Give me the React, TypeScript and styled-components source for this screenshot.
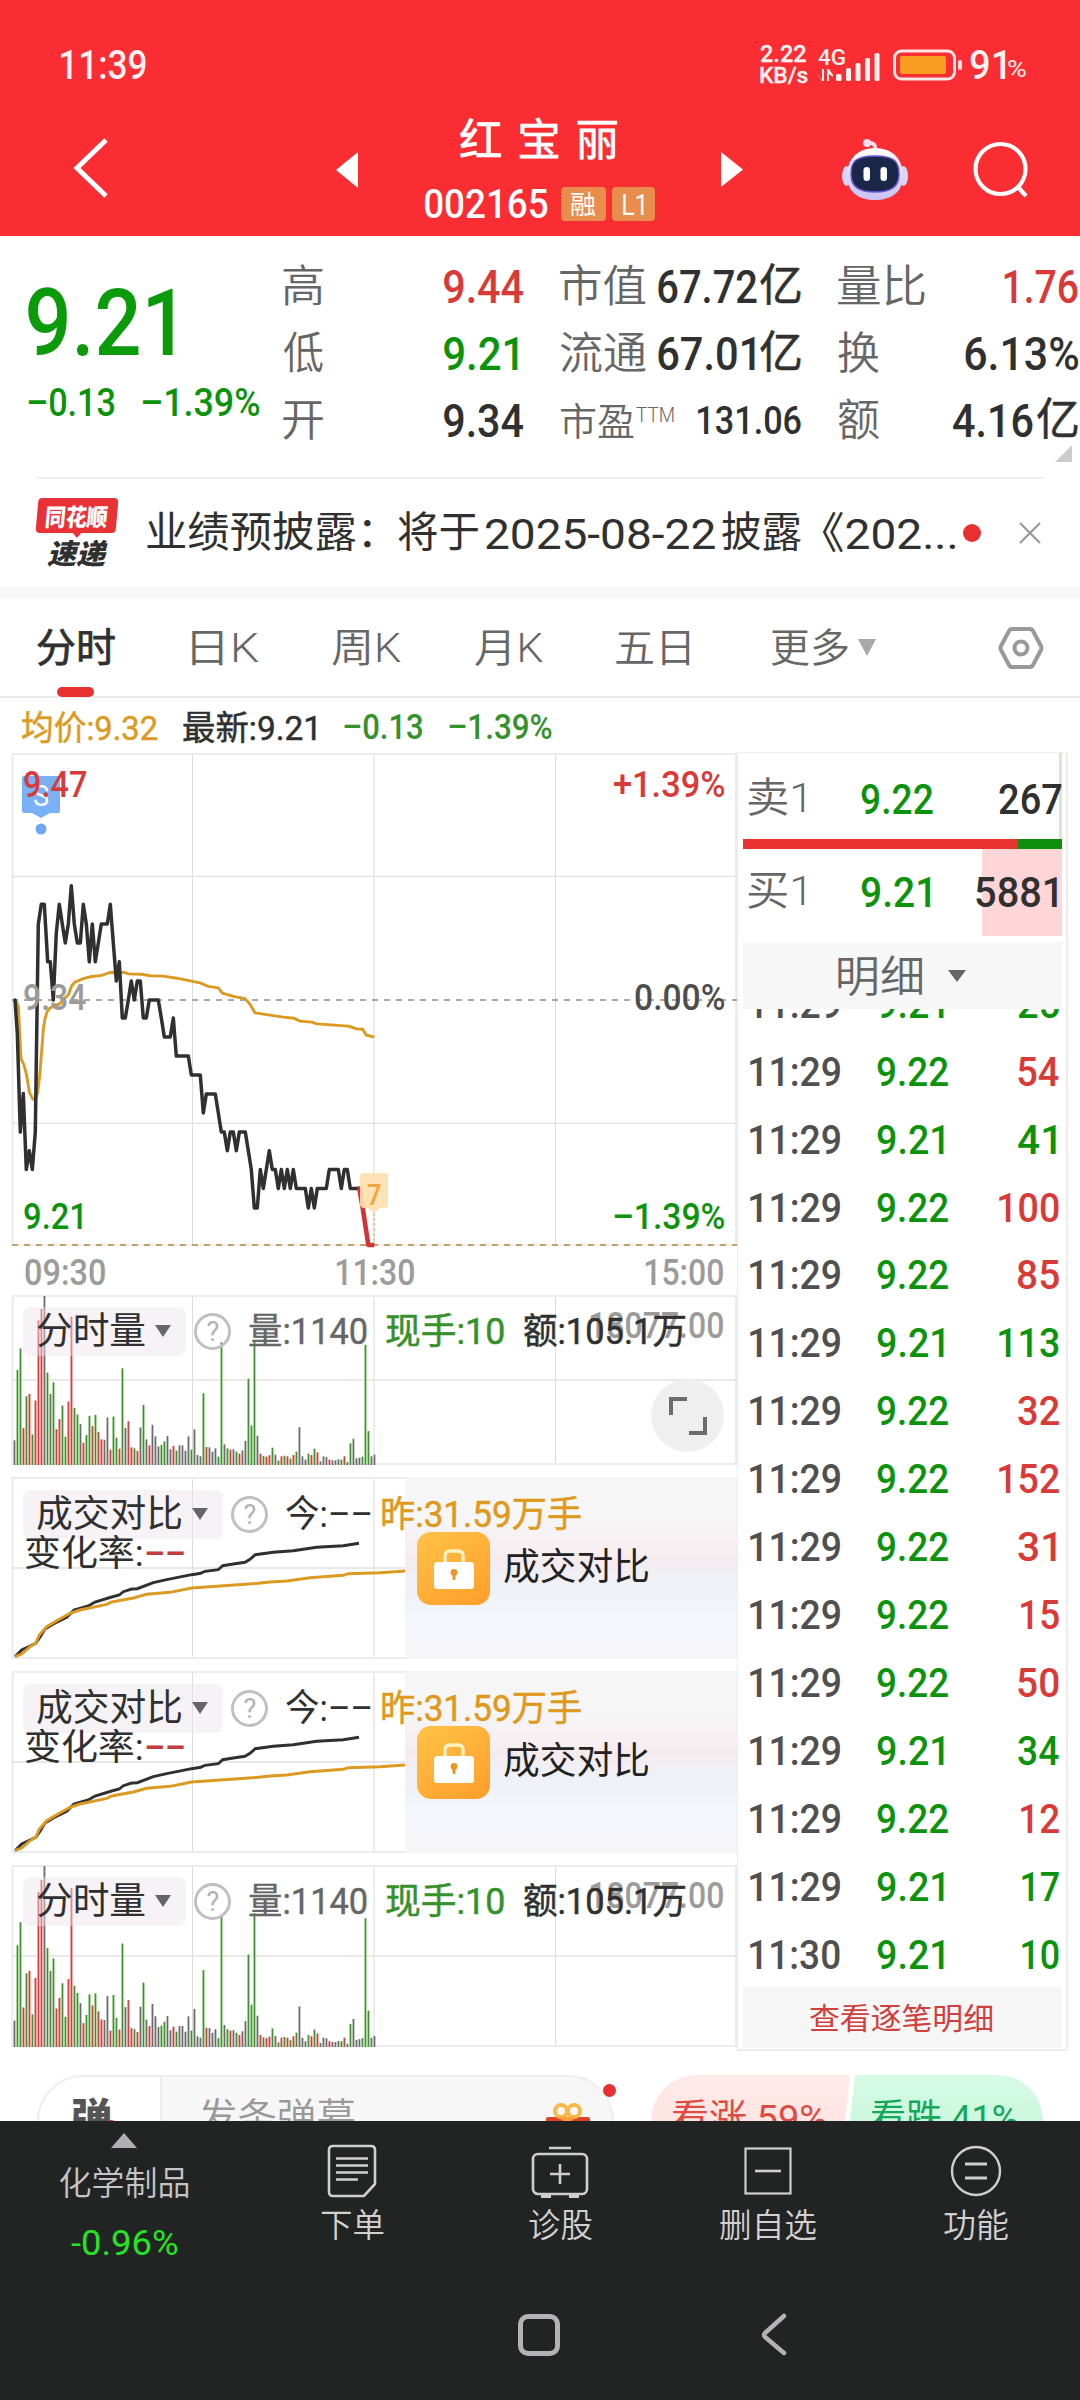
import React from 'react';
import styled, { createGlobalStyle } from 'styled-components';

const Global = createGlobalStyle`
  * { box-sizing: border-box; }
  html, body { margin: 0; padding: 0; background: #fff; }
  body { width: 1080px; overflow-x: hidden; }
  svg { display: block; flex: none; }
`;

const NUM = 'Roboto, "Noto Sans CJK SC", sans-serif';
const HAN = '"Noto Sans CJK SC", sans-serif';
const RED = '#d93a38';
const GREEN = '#0c930c';
const INK = '#303030';
const GREY = '#666';
const AMBER = '#dd9a22';

/* ---------- text fitted to an ink width ---------- */

const Slot = styled.span<{ $size: number; $ml: number; $dy: number }>`
  display: flex;
  align-items: center;
  flex: none;
  height: ${(p) => Math.round(p.$size * 1.2)}px;
  margin-left: ${(p) => p.$ml}px;
  margin-top: ${(p) => p.$dy * 2 + 2}px;
`;
const Ink = styled.span<{
  $size: number;
  $color: string;
  $weight: number;
  $font: string;
  $italic: boolean;
  $gap: number;
  $stroke: number;
}>`
  display: block;
  flex: none;
  white-space: pre;
  transform-origin: 0 50%;
  font-family: ${(p) => p.$font};
  font-size: ${(p) => p.$size}px;
  font-weight: ${(p) => p.$weight};
  font-style: ${(p) => (p.$italic ? 'italic' : 'normal')};
  line-height: ${(p) => Math.round(p.$size * 1.2)}px;
  letter-spacing: ${(p) => p.$gap}px;
  color: ${(p) => p.$color};
  -webkit-text-stroke: ${(p) => p.$stroke}px ${(p) => p.$color};
`;

const ctx = document.createElement('canvas').getContext('2d')!;

type TextProps = {
  children: string;
  w: number;
  size: number;
  color?: string;
  weight?: number;
  font?: string;
  italic?: boolean;
  gap?: number;
  stroke?: number;
  ml?: number;
  dy?: number;
};

function T({
  children,
  w,
  size,
  color = INK,
  weight = 500,
  font = NUM,
  italic = false,
  gap = 0,
  stroke = 0,
  ml = 0,
  dy = 0,
}: TextProps) {
  ctx.font = `${italic ? 'italic ' : ''}${weight} ${size}px ${font}`;
  const m = ctx.measureText(children);
  const ink = m.actualBoundingBoxRight + m.actualBoundingBoxLeft + gap * (children.length - 1);
  const k = w / ink;
  return (
    <Slot $size={size} $ml={ml} $dy={dy} style={{ width: w }}>
      <Ink
        $size={size}
        $color={color}
        $weight={weight}
        $font={font}
        $italic={italic}
        $gap={gap}
        $stroke={stroke}
        style={{ transform: `translateX(${m.actualBoundingBoxLeft * k}px) scaleX(${k})` }}
      >
        {children}
      </Ink>
    </Slot>
  );
}

/* ---------- layout parts ---------- */

const Screen = styled.div`
  width: 1080px;
  height: 2400px;
  overflow: hidden;
  display: flex;
  flex-direction: column;
  background: #fff;
`;
const Header = styled.header`
  height: 236px;
  flex: none;
  background: #f92d32;
`;
const StatusBar = styled.div`
  height: 106px;
  padding: 24px 0 0 61px;
  display: flex;
  align-items: center;
`;
const Stack = styled.div<{ $ml: number; $w: number }>`
  width: ${(p) => p.$w}px;
  margin-left: ${(p) => p.$ml}px;
  display: flex;
  flex-direction: column;
  flex: none;
`;
const TitleBar = styled.div`
  display: flex;
  height: 130px;
  align-items: flex-start;
`;
const Icon = styled.div<{ $ml: number; $mt: number }>`
  margin: ${(p) => p.$mt}px 0 0 ${(p) => p.$ml}px;
  flex: none;
`;
const TitleBlock = styled.div`
  margin-left: 67px;
  width: 230px;
  display: flex;
  flex-direction: column;
`;
const CodeLine = styled.div`
  display: flex;
  align-items: center;
  height: 34px;
  margin-top: 21px;
`;
const Badge = styled.div<{ $w: number; $ml: number }>`
  width: ${(p) => p.$w}px;
  height: 34px;
  margin-left: ${(p) => p.$ml}px;
  border-radius: 4px;
  background: #e88d4b;
  display: flex;
  align-items: center;
  justify-content: center;
`;

const Quote = styled.section`
  height: 241px;
  flex: none;
  display: flex;
  position: relative;
`;
const PriceBlock = styled.div`
  width: 283px;
  padding: 38px 0 0 28px;
`;
const Line = styled.div<{ $h: number; $pl?: number; $mt?: number }>`
  height: ${(p) => p.$h}px;
  padding-left: ${(p) => p.$pl || 0}px;
  margin-top: ${(p) => p.$mt || 0}px;
  display: flex;
  align-items: center;
`;
const StatCol = styled.div<{ $w: number; $ml: number }>`
  width: ${(p) => p.$w}px;
  margin-left: ${(p) => p.$ml}px;
  padding-top: 17px;
  flex: none;
`;
const StatRow = styled.div`
  height: 67px;
  display: flex;
  align-items: center;
  justify-content: space-between;
`;
const Pair = styled.span`
  display: flex;
  align-items: center;
`;
const Sup = styled.span`
  display: flex;
`;
const CornerMark = styled.i`
  position: absolute;
  left: 1055px;
  top: 209px;
  border-left: 17px solid transparent;
  border-bottom: 17px solid #ccc;
`;
const News = styled.section`
  height: 110px;
  flex: none;
  margin: 0 37px;
  border-top: 2px solid #ededed;
  display: flex;
  align-items: center;
`;
const Logo = styled.div`
  width: 82px;
  height: 70px;
  display: flex;
  flex-direction: column;
  position: relative;
`;
const LogoTag = styled.div`
  height: 35px;
  width: 80px;
  flex: none;
  border-radius: 4px;
  background: #e93236;
  transform: skewX(-5deg);
  display: flex;
  align-items: center;
  justify-content: center;
`;
const LogoTip = styled.i`
  position: absolute;
  left: 35px;
  top: 34px;
  border: 5px solid transparent;
  border-top: 6px solid #e93236;
`;
const Dot = styled.i<{ $d: number; $ml: number }>`
  width: ${(p) => p.$d}px;
  height: ${(p) => p.$d}px;
  margin-left: ${(p) => p.$ml}px;
  border-radius: 50%;
  background: #e93030;
  flex: none;
`;
const Band = styled.div`
  height: 12px;
  flex: none;
  background: #f7f7f7;
`;
const Tabs = styled.nav`
  height: 99px;
  flex: none;
  display: flex;
  align-items: center;
  border-bottom: 2px solid #ebebeb;
  position: relative;
`;
const Underline = styled.i`
  position: absolute;
  left: 57px;
  bottom: -1px;
  width: 37px;
  height: 10px;
  border-radius: 5px;
  background: #e93030;
`;
const Down = styled.i<{ $w: number; $h: number; $ml: number; $c?: string }>`
  margin-left: ${(p) => p.$ml}px;
  border: ${(p) => p.$w / 2}px solid transparent;
  border-top: ${(p) => p.$h}px solid ${(p) => p.$c || GREY};
  border-bottom: 0;
  flex: none;
`;
const Body = styled.main`
  display: flex;
  height: 1308px;
  flex: none;
`;
const Charts = styled.div`
  width: 737px;
  flex: none;
`;
const Panel = styled.section<{ $h: number }>`
  height: ${(p) => p.$h}px;
  position: relative;
`;
const Over = styled.div<{ $x: number; $y: number }>`
  position: absolute;
  left: ${(p) => p.$x}px;
  top: ${(p) => p.$y}px;
  display: flex;
  align-items: center;
  height: 50px;
`;
const Pill = styled.div<{ $w: number }>`
  width: ${(p) => p.$w}px;
  height: 49px;
  border-radius: 8px;
  background: rgba(236, 226, 236, 0.46);
  display: flex;
  align-items: center;
  padding-left: 14px;
`;
const Help = styled.div<{ $ml: number }>`
  width: 37px;
  height: 37px;
  margin-left: ${(p) => p.$ml}px;
  border: 3px solid #c2bec2;
  border-radius: 50%;
  display: flex;
  align-items: center;
  justify-content: center;
  flex: none;
`;
const Expand = styled.button`
  position: absolute;
  left: 651px;
  top: 85px;
  width: 73px;
  height: 73px;
  padding: 0;
  border: 0;
  border-radius: 50%;
  background: #efefef;
  display: flex;
  align-items: center;
  justify-content: center;
`;
const Locked = styled.div`
  position: absolute;
  left: 405px;
  top: 1px;
  width: 332px;
  height: 182px;
  background: linear-gradient(180deg, #f6f6f6 0%, #f6f6f7 22%, #f7f0f3 36%, #f5ebef 46%, #eff1f7 56%, #eff2f8 66%, #f5f6fc 76%, #f6f6fb 92%, #f6f6f6 100%);
  display: flex;
  padding: 55px 0 0 12px;
`;
const LockTile = styled.div`
  width: 73px;
  height: 73px;
  border-radius: 14px;
  background: linear-gradient(145deg, #ffc346, #ff9d2b);
  display: flex;
  align-items: center;
  justify-content: center;
`;

const Book = styled.aside`
  width: 331px;
  height: 1299px;
  border: 1px solid #ececec;
  border-width: 1px 2px 2px 1px;
  padding: 0 4px 0 5px;
  flex: none;
`;
const Level = styled.div<{ $h: number; $bar: number; $tint: string }>`
  height: ${(p) => p.$h}px;
  display: flex;
  align-items: center;
  padding-left: 5px;
  background: linear-gradient(${(p) => p.$tint}, ${(p) => p.$tint}) right / ${(p) => p.$bar}px 100% no-repeat;
`;
const Spring = styled.i`
  flex: 1;
`;
const Gap = styled.i<{ $w: number }>`
  width: ${(p) => p.$w}px;
  flex: none;
`;
const Ratio = styled.div`
  height: 10px;
  display: flex;
  background: linear-gradient(90deg, #e93232 275px, #0d8f0d 275px);
`;
const Detail = styled.div`
  height: 67px;
  margin-top: 6px;
  background: #f7f7f7;
  display: flex;
  align-items: center;
`;
const Ticks = styled.div`
  height: 978px;
  overflow: hidden;
  display: flex;
  flex-direction: column;
  justify-content: flex-end;
`;
const Tick = styled.div`
  height: 67.96px;
  flex: none;
  display: flex;
  align-items: center;
  padding: 3px 3px 0 7px;
`;
const AllTicks = styled.button`
  width: 100%;
  height: 61px;
  border: 0;
  padding: 0 3px 0 0;
  background: #f6f6f6;
  display: flex;
  align-items: center;
  justify-content: center;
`;

const Social = styled.section`
  height: 61px;
  flex: none;
  overflow: hidden;
  padding: 15px 37px 0;
  display: flex;
  align-items: flex-start;
`;
const Danmu = styled.div`
  width: 577px;
  height: 92px;
  border: 2px solid #eeeeee;
  border-radius: 46px;
  display: flex;
  flex: none;
  background: linear-gradient(90deg, #fff 121px, #ebebeb 121px, #ebebeb 123px, #f7f7f7 123px);
  padding-top: 14px;
  position: relative;
`;
const RedSpot = styled.i<{ $x: number; $y: number; $d: number }>`
  position: absolute;
  left: ${(p) => p.$x}px;
  top: ${(p) => p.$y}px;
  width: ${(p) => p.$d}px;
  height: ${(p) => p.$d}px;
  border-radius: 50%;
  background: #e93030;
`;
const Vote = styled.div<{ $up: boolean }>`
  width: ${(p) => (p.$up ? 199 : 193)}px;
  height: 92px;
  margin-left: ${(p) => (p.$up ? 37 : 0)}px;
  border-radius: ${(p) => (p.$up ? '46px 0 0 46px' : '0 46px 46px 0')};
  background: ${(p) => (p.$up ? 'linear-gradient(#ffe9e8, #fde2df)' : 'linear-gradient(#d6fbe6, #c4f3d8)')};
  clip-path: ${(p) => (p.$up ? 'polygon(0 0, 100% 0, 95% 100%, 0 100%)' : 'polygon(5px 0, 100% 0, 100% 100%, -5px 100%)')};
  display: flex;
  padding: 16px 0 0 21px;
  flex: none;
`;

const Dock = styled.footer`
  height: 279px;
  flex: none;
  background: #212422;
`;
const Actions = styled.div`
  display: flex;
  height: 150px;
`;
const Action = styled.div<{ $w: number; $ml?: number }>`
  width: ${(p) => p.$w}px;
  margin-left: ${(p) => p.$ml || 0}px;
  display: flex;
  flex-direction: column;
  align-items: center;
  flex: none;
`;
const ActionIcon = styled.div`
  height: 54px;
  margin-top: 23px;
  margin-bottom: 6px;
  display: flex;
  align-items: center;
`;
const Up = styled.i`
  margin-top: 12px;
  border: 13px solid transparent;
  border-top: 0;
  border-bottom: 15px solid #b2aeb2;
`;
const System = styled.div`
  display: flex;
  padding: 42px 0 0 517px;
`;

/* ---------- chart data ---------- */

const PRICE =
  '45,728 52,820 61,1098 70,990 79,1203 88,1150 97,1203 106,1098 115,515 124,460 133,460 143,621 151,621 160,728 169,540 178,460 187,515 196,568 205,515 214,408 223,515 232,568 241,568 250,460 259,515 268,621 277,515 286,621 295,568 304,515 322,515 331,460 340,568 349,675 358,621 367,778 376,778 385,728 394,675 403,728 412,675 421,675 430,778 439,778 448,728 475,728 484,778 493,832 511,832 520,778 529,885 565,885 574,938 601,938 610,1044 619,991 646,991 655,1044 664,1098 673,1098 682,1150 691,1098 700,1098 709,1150 718,1098 736,1098 745,1150 754,1203 763,1310 772,1310 781,1203 790,1256 799,1203 808,1150 817,1203 826,1203 835,1256 844,1203 853,1256 862,1203 871,1256 880,1203 889,1256 916,1256 925,1310 934,1256 943,1310 952,1256 979,1256 988,1203 1015,1203 1024,1256 1033,1203 1042,1203 1051,1256 1078,1256';
const DROP = '1073,1256 1078,1256 1088,1310 1105,1414 1123,1414';
const AVERAGE =
  '48,730 55,745 63,892 72,910 80,940 88,985 97,1003 106,1010 113,985 119,940 125,870 130,810 135,780 142,760 150,750 165,744 180,738 195,722 205,714 215,688 225,678 250,668 270,663 305,659 330,651 375,651 385,655 425,656 450,660 490,661 530,667 600,680 625,690 655,694 667,709 700,718 735,724 750,740 765,764 800,769 850,776 882,779 900,787 935,790 950,795 1045,801 1070,809 1088,810 1098,826 1123,832';
const TODAY =
  '45,1130 65,1110 90,1098 107,1090 120,1072 135,1047 160,1032 200,1012 222,990 265,978 285,966 335,951 358,945 370,935 395,927 412,926 460,908 500,899 575,884 602,880 615,874 655,869 668,857 700,852 735,847 750,838 766,824 820,817 880,812 950,802 1030,797 1077,790';
const YESTERDAY =
  '45,1130 65,1122 90,1100 107,1090 118,1065 140,1040 170,1022 210,1000 240,990 320,973 335,966 400,954 440,943 510,937 575,924 650,919 775,910 810,906 860,903 930,893 1030,886 1045,881 1140,878 1215,873';

const plot = (s: string, ky: number, oy: number) =>
  s
    .split(' ')
    .map((p) => {
      const [x, y] = p.split(',').map(Number);
      return `${(x / 3).toFixed(1)},${(y / ky + oy).toFixed(1)}`;
    })
    .join(' ');

/* one entry a minute: k flat, g falling, r rising, followed by the height */
const VOLUME =
  'k74 g286 g351 r111 g207 r214 g92 r194 r436 r470 k509 g278 k214 g249 r108 r138 g179 g85 r191 r447 g172 g152 k123 r67 g90 g148 r117 g151 r100 r77 k76 k143 r46 g146 g82 r49 g291 k112 r132 r53 g50 r42 k113 g181 k77 r59 k121 k86 k56 g60 g71 k87 k47 r57 g43 k59 k59 k43 k86 g46 k107 k30 k26 g216 r54 k53 k40 k50 g25 g369 k62 g50 r46 k47 g40 r34 k44 k73 g260 g119 g376 k88 r34 g27 r25 r29 g52 k31 g13 r26 g28 r26 g19 r30 g40 k114 k26 k16 g34 r30 g49 r38 k11 k26 k24 r16 k14 k14 k17 g16 r26 k9 g65 k79 k20 k22 g25 g362 g102 k26 k31'
    .split(' ')
    .map((v) => ({ c: v[0], h: Number(v.slice(1)) / 3 }));
const BAR: Record<string, [string, string]> = {
  k: ['#c6c6c6', '#6b6b6b'],
  g: ['#a9dc9b', '#3f8f33'],
  r: ['#f5a3a3', '#c94444'],
};

function Grid({ top, bottom, mids }: { top: number; bottom: number; mids: number[] }) {
  return (
    <g fill="none">
      <path d={`M192.5 ${top}V${bottom}M555.5 ${top}V${bottom}`} stroke="#dcdcdc" strokeWidth="1" />
      <path d={`M12.5 ${top}H736V${bottom}H12.5ZM374 ${top}V${bottom}`} stroke="#ececec" strokeWidth="2" />
      {mids.map((y) => (
        <path key={y} d={`M12 ${y}H737`} stroke="#e2e2e2" strokeWidth="1.3" />
      ))}
    </g>
  );
}

function HelpMark({ ml }: { ml: number }) {
  return (
    <Help $ml={ml}>
      <T w={12} size={27} weight={400} color="#b4b0b4">?</T>
    </Help>
  );
}

function VolumePanel({ height, total, expand }: { height: number; total: number; expand?: boolean }) {
  const bottom = 2 + height;
  return (
    <Panel $h={total}>
      <svg width="737" height={height + 4} viewBox={`0 0 737 ${height + 4}`}>
        <Grid top={2} bottom={bottom} mids={[2 + height / 2]} />
        {VOLUME.map((v, i) => {
          const h = (v.h * (height + 1)) / 169.7;
          const x = 14.3 + i * 3;
          return (
            <g key={i}>
              <rect x={x - 1.3} y={bottom + 1 - h} width="3" height={h} fill={BAR[v.c][0]} opacity={0.75} />
              <rect x={x - 0.5} y={bottom + 1 - h} width="1.3" height={h} fill={BAR[v.c][1]} />
            </g>
          );
        })}
      </svg>
      <Over $x={23} $y={12}>
        <Pill $w={163}>
          <T w={108} size={37} weight={400}>分时量</T>
          <Down $w={17} $h={12} $ml={10} />
        </Pill>
        <HelpMark ml={8} />
        <T w={118} size={36} weight={400} stroke={0.4} color={GREY} ml={18}>量:1140</T>
        <T w={118} size={36} weight={400} stroke={0.5} color="#35912a" ml={19}>现手:10</T>
      </Over>
      <Over $x={590} $y={6}>
        <T w={133} size={36} weight={500} color="#9b9b9b">18077.00</T>
      </Over>
      <Over $x={524} $y={12}>
        <T w={161} size={36} weight={400} stroke={0.5}>额:105.1万</T>
      </Over>
      {expand && (
        <Expand>
          <svg width="40" height="40" viewBox="0 0 40 40" fill="none" stroke="#6b6b6b" strokeWidth="4">
            <path d="M3 19V3H19M37 21V37H21" />
          </svg>
        </Expand>
      )}
    </Panel>
  );
}

function ComparePanel() {
  return (
    <Panel $h={194}>
      <svg width="737" height="186" viewBox="0 0 737 186">
        <Grid top={2} bottom={182} mids={[92]} />
        <polyline points={plot(TODAY, 3, -196)} fill="none" stroke={INK} strokeWidth="2.9" />
        <polyline points={plot(YESTERDAY, 3, -196)} fill="none" stroke={AMBER} strokeWidth="2.9" />
      </svg>
      <Locked>
        <LockTile>
          <svg width="42" height="42" viewBox="0 0 42 42">
            <path d="M12 15V8Q12 3 17 3H25Q30 3 30 8V15" fill="none" stroke="#fff3c4" strokeWidth="3.4" />
            <rect x="1" y="14" width="40" height="27" rx="3.5" fill="#fff" />
            <circle cx="21" cy="24.500" r="3.4" fill="#ee9422" />
            <rect x="19.500" y="25" width="3" height="7" rx="1" fill="#ee9422" />
          </svg>
        </LockTile>
        <Line $h={70} $pl={14}>
          <T w={144} size={37} weight={400} color="#222">成交对比</T>
        </Line>
      </Locked>
      <Over $x={23} $y={13}>
        <Pill $w={200}>
          <T w={144} size={37} weight={400}>成交对比</T>
          <Down $w={17} $h={12} $ml={11} />
        </Pill>
        <HelpMark ml={8} />
        <T w={85} size={37} weight={400} ml={18}>今:––</T>
        <T w={199} size={36} weight={400} stroke={0.5} color="#df991c" ml={11}>昨:31.59万手</T>
      </Over>
      <Over $x={25} $y={52}>
        <T w={117} size={36} weight={400}>变化率:</T>
        <T w={38} size={36} weight={500} color="#c53c3c" ml={4}>––</T>
      </Over>
    </Panel>
  );
}

function MainChart() {
  return (
    <Panel $h={542}>
      <svg width="737" height="542" viewBox="0 0 737 542">
        <Grid top={2} bottom={493} mids={[124.4, 371.4]} />
        <path d="M12 248H737" stroke="#8d8d8d" strokeWidth="1.7" strokeDasharray="6 6" />
        <path d="M12 493H737" stroke="#c5a26b" strokeWidth="2" strokeDasharray="6 6" />
        <polyline points={plot(AVERAGE, 2.8, -12)} fill="none" stroke={AMBER} strokeWidth="2.9" strokeLinejoin="round" />
        <polyline points={plot(PRICE, 2.8, -12)} fill="none" stroke={INK} strokeWidth="3.5" strokeLinejoin="round" strokeLinecap="round" />
        <polyline points={plot(DROP, 2.8, -12)} fill="none" stroke="#d03535" strokeWidth="4.6" strokeLinejoin="round" />
        <path d="M374 461V491" stroke="#e4bf86" strokeWidth="1.6" strokeDasharray="3 2" />
        <path d="M364 421H384Q388 421 388 425V452Q388 456 384 456H380L374 461L368 456H364Q360 456 360 452V425Q360 421 364 421Z" fill="#ffdfae" opacity="0.9" />
        <path d="M24 24H58Q60 24 60 26V59Q60 61 58 61H50L41 66L32 61H24Q22 61 22 59V26Q22 24 24 24Z" fill="#7ab0f5" />
        <circle cx="41" cy="77" r="5.500" fill="#6ea6f0" />
      </svg>
      <Over $x={34} $y={18}><T w={15} size={29} weight={400} color="#fff">S</T></Over>
      <Over $x={24} $y={7}><T w={62} size={36} color={RED}>9.47</T></Over>
      <Over $x={614} $y={7}><T w={110} size={36} color={RED}>+1.39%</T></Over>
      <Over $x={24} $y={220}><T w={62} size={36} color="#9b9b9b">9.34</T></Over>
      <Over $x={635} $y={220}><T w={89} size={36} color="#4d4d4d">0.00%</T></Over>
      <Over $x={24} $y={439}><T w={58} size={36} color={GREEN}>9.21</T></Over>
      <Over $x={614} $y={439}><T w={110} size={36} color={GREEN}>–1.39%</T></Over>
      <Over $x={367} $y={417}><T w={14} size={29} color="#f0a53a">7</T></Over>
      <Over $x={25} $y={495}><T w={80} size={36} color="#9b9b9b">09:30</T></Over>
      <Over $x={336} $y={495}><T w={78} size={36} color="#9b9b9b">11:30</T></Over>
      <Over $x={645} $y={495}><T w={78} size={36} color="#9b9b9b">15:00</T></Over>
    </Panel>
  );
}

const TICKS: [string, string, string, number, string][] = [
  ['11:29', '9.21', '25', 41, GREEN],
  ['11:29', '9.22', '54', 41, RED],
  ['11:29', '9.21', '41', 38, GREEN],
  ['11:29', '9.22', '100', 60, RED],
  ['11:29', '9.22', '85', 41, RED],
  ['11:29', '9.21', '113', 60, GREEN],
  ['11:29', '9.22', '32', 41, RED],
  ['11:29', '9.22', '152', 60, RED],
  ['11:29', '9.22', '31', 38, RED],
  ['11:29', '9.22', '15', 38, RED],
  ['11:29', '9.22', '50', 41, RED],
  ['11:29', '9.21', '34', 41, GREEN],
  ['11:29', '9.22', '12', 38, RED],
  ['11:29', '9.21', '17', 37, GREEN],
  ['11:30', '9.21', '10', 37, GREEN],
];

const TABS: [string, number, number][] = [
  ['日K', 67, 77],
  ['周K', 69, 73],
  ['月K', 68, 74],
  ['五日', 74, 73],
  ['更多', 77, 81],
];

export default function App() {
  return (
    <Screen>
      <Global />
      <Header>
        <StatusBar>
          <T w={85} size={40} color="#fff0f0">11:39</T>
          <Stack $ml={614} $w={48}>
            <T w={46} size={24} color="#fff0f0" stroke={0.3} dy={-2}>2.22</T>
            <T w={48} size={22} color="#fff0f0" stroke={0.3} dy={-4}>KB/s</T>
          </Stack>
          <Icon $ml={9} $mt={0}>
            <Stack $ml={0} $w={63}>
              <svg width="63" height="38" viewBox="0 -2 63 38" fill="#fff0f0">
                <text x="1" y="16.500" fontFamily="Roboto, sans-serif" fontWeight="500" fontSize="22" textLength="28" lengthAdjust="spacingAndGlyphs">4G</text>
                <path d="M0 25L5 32V21H7V33H5ZM10 33V21H12L16 27V29L12 26V33Z" />
                <rect x="19" y="26" width="5.500" height="7" rx="1.500" />
                <rect x="29" y="20" width="5" height="13" rx="1.500" />
                <rect x="38.500" y="15" width="5" height="18" rx="1.500" />
                <rect x="48" y="10" width="5" height="23" rx="1.500" />
                <rect x="57.500" y="5" width="5" height="28" rx="1.500" />
              </svg>
            </Stack>
          </Icon>
          <Icon $ml={13} $mt={0}>
            <svg width="70" height="32" viewBox="0 0 70 32">
              <rect x="1.500" y="2" width="60" height="28" rx="7" fill="none" stroke="#ffe6e6" strokeWidth="3" />
              <rect x="7" y="7" width="46" height="18" rx="2" fill="#f99d22" />
              <rect x="65" y="11" width="4" height="10" rx="2" fill="#ffe6e6" />
            </svg>
          </Icon>
          <T w={35} size={40} color="#fff0f0" ml={7}>91</T>
          <T w={18} size={24} weight={400} color="#fff0f0" ml={3} dy={3}>%</T>
        </StatusBar>
        <TitleBar>
          <Icon $ml={72} $mt={31}>
            <svg width="38" height="62" viewBox="0 0 38 62" fill="none" stroke="#fff" strokeWidth="5">
              <path d="M34 3L5 31L34 59" />
            </svg>
          </Icon>
          <Icon $ml={226} $mt={46}>
            <svg width="22" height="36" viewBox="0 0 22 36"><path d="M22 0V36L0 18Z" fill="#fff" /></svg>
          </Icon>
          <TitleBlock>
            <Line $h={54} $pl={35} $mt={6}>
              <T w={157} size={44} weight={400} stroke={0.7} font={HAN} gap={15} color="#fff" dy={-3}>红宝丽</T>
            </Line>
            <CodeLine>
              <T w={123} size={40} color="#fff">002165</T>
              <Badge $w={45} $ml={13}><T w={25} size={26} weight={400} color="#fff">融</T></Badge>
              <Badge $w={43} $ml={6}><T w={21} size={29} weight={400} color="#fff">L1</T></Badge>
            </CodeLine>
          </TitleBlock>
          <Icon $ml={66} $mt={46}>
            <svg width="22" height="35" viewBox="0 0 22 35"><path d="M0 0V35L22 17.500Z" fill="#fff" /></svg>
          </Icon>
          <Icon $ml={98} $mt={32}>
            <svg width="68" height="64" viewBox="0 0 68 64">
              <defs>
                <linearGradient id="shell" x1="0" y1="0" x2="0" y2="1">
                  <stop offset="0" stopColor="#fff" />
                  <stop offset="0.6" stopColor="#dcd4fb" />
                  <stop offset="1" stopColor="#c9c3f5" />
                </linearGradient>
              </defs>
              <path d="M34 12Q35 5 29 5" fill="none" stroke="#fbdfee" strokeWidth="4" />
              <circle cx="26" cy="5" r="4" fill="#fbdfee" />
              <ellipse cx="5.500" cy="38" rx="4.500" ry="10" fill="#d6d5f5" />
              <ellipse cx="62.500" cy="38" rx="4.500" ry="10" fill="#d6d5f5" />
              <path d="M34 10C54 10 62 24 62 38C62 54 50 62 34 62S6 54 6 38C6 24 14 10 34 10Z" fill="url(#shell)" />
              <path d="M34 18C54 18 58 24 58 36C58 49 50 54 34 54S10 49 10 36C10 24 14 18 34 18Z" fill="#1b2748" stroke="#6a56d8" strokeWidth="1.500" />
              <rect x="22.500" y="29" width="6.500" height="14" rx="3.200" fill="#fff" />
              <rect x="39.500" y="29" width="6.500" height="14" rx="3.200" fill="#fff" />
            </svg>
          </Icon>
          <Icon $ml={63} $mt={34}>
            <svg width="60" height="60" viewBox="0 0 60 60" fill="none" stroke="#fff" strokeWidth="4.200">
              <circle cx="28.500" cy="29" r="25" />
              <path d="M46 47L54 56" />
            </svg>
          </Icon>
        </TitleBar>
      </Header>

      <Quote>
        <PriceBlock>
          <Line $h={94}><T w={145} size={92} color="#0a9a0a" dy={2}>9.21</T></Line>
          <Line $h={68}>
            <T w={86} size={39} color={GREEN}>–0.13</T>
            <T w={117} size={39} color={GREEN} ml={28}>–1.39%</T>
          </Line>
        </PriceBlock>
        <StatCol $w={240} $ml={0}>
          <StatRow><T w={40} size={44} weight={350} color={GREY}>高</T><T w={79} size={46} color={RED}>9.44</T></StatRow>
          <StatRow><T w={40} size={44} weight={350} color={GREY}>低</T><Pair><T w={74} size={46} color={GREEN}>9.21</T><Gap $w={5} /></Pair></StatRow>
          <StatRow><T w={40} size={44} weight={350} color={GREY}>开</T><T w={79} size={46}>9.34</T></StatRow>
        </StatCol>
        <StatCol $w={241} $ml={37}>
          <StatRow>
            <T w={86} size={44} weight={350} color={GREY}>市值</T>
            <Pair><T w={99} size={46}>67.72</T><T w={41} size={44} weight={400} stroke={0.5} ml={3} dy={-1}>亿</T></Pair>
          </StatRow>
          <StatRow>
            <T w={86} size={44} weight={350} color={GREY}>流通</T>
            <Pair><T w={97} size={46}>67.01</T><T w={41} size={44} weight={400} stroke={0.5} ml={5} dy={-1}>亿</T></Pair>
          </StatRow>
          <StatRow>
            <Sup>
              <T w={74} size={38} weight={350} color={GREY}>市盈</T>
              <T w={38} size={21} weight={300} color={GREY} ml={2} dy={2}>TTM</T>
            </Sup>
            <T w={103} size={39}>131.06</T>
          </StatRow>
        </StatCol>
        <StatCol $w={240} $ml={37}>
          <StatRow><T w={87} size={44} weight={350} color={GREY}>量比</T><T w={74} size={46} color={RED}>1.76</T></StatRow>
          <StatRow><T w={41} size={44} weight={350} color={GREY}>换</T><T w={113} size={46}>6.13%</T></StatRow>
          <StatRow>
            <T w={41} size={44} weight={350} color={GREY}>额</T>
            <Pair><T w={80} size={46}>4.16</T><T w={41} size={44} weight={400} stroke={0.5} ml={4} dy={-1}>亿</T></Pair>
          </StatRow>
        </StatCol>
        <CornerMark />
      </Quote>

      <News>
        <Logo>
          <LogoTag><T w={62} size={24} weight={900} font={HAN} color="#fff" dy={-1}>同花顺</T></LogoTag>
          <LogoTip />
          <T w={61} size={28} weight={900} font={HAN} italic ml={10} dy={0}>速递</T>
        </Logo>
        <T w={224} size={42} weight={400} ml={28} dy={-1}>业绩预披露：</T>
        <T w={80} size={42} weight={400} ml={27} dy={-1}>将于</T>
        <T w={230} size={43} weight={400} ml={7}>2025-08-22</T>
        <T w={79} size={42} weight={400} ml={7} dy={-1}>披露</T>
        <T w={133} size={43} weight={400} ml={21}>《202...</T>
        <Dot $d={18} $ml={8} />
        <Icon $ml={37} $mt={0}>
          <svg width="24" height="24" viewBox="0 0 24 24" stroke="#999" strokeWidth="2.200"><path d="M2 2L22 22M22 2L2 22" /></svg>
        </Icon>
      </News>
      <Band />
      <Tabs>
        <T w={78} size={40} weight={400} stroke={0.8} ml={37}>分时</T>
        {TABS.map(([label, w, ml]) => (
          <T key={label} w={w} size={40} weight={350} color={GREY} ml={ml}>{label}</T>
        ))}
        <Down $w={19} $h={17} $ml={10} $c="#aaa7aa" />
        <Icon $ml={122} $mt={0}>
          <svg width="46" height="44" viewBox="0 0 46 44" fill="none" stroke="#999" strokeWidth="4">
            <path d="M14 3H32Q34 3 35 5L43 20Q44 22 43 24L35 39Q34 41 32 41H14Q12 41 11 39L3 24Q2 22 3 20L11 5Q12 3 14 3Z" />
            <circle cx="23" cy="22" r="6.500" />
          </svg>
        </Icon>
        <Underline />
      </Tabs>
      <Line $h={54} $pl={22}>
        <T w={135} size={34} weight={400} stroke={0.5} color={AMBER} dy={2}>均价:9.32</T>
        <T w={133} size={34} weight={400} stroke={0.5} ml={26} dy={2}>最新:9.21</T>
        <T w={78} size={35} weight={500} color="#35912a" ml={28} dy={2}>–0.13</T>
        <T w={103} size={35} weight={500} color="#35912a" ml={27} dy={2}>–1.39%</T>
      </Line>

      <Body>
        <Charts>
          <MainChart />
          <VolumePanel height={168} total={182} expand />
          <ComparePanel />
          <ComparePanel />
          <VolumePanel height={180} total={194} />
        </Charts>
        <Book>
          <Level $h={86} $bar={3} $tint="#d3e9d2">
            <T w={56} size={41} weight={350} color={GREY} dy={1}>卖1</T>
            <T w={72} size={42} color={GREEN} ml={57} dy={3}>9.22</T>
            <Spring />
            <T w={63} size={42} dy={3}>267</T>
          </Level>
          <Ratio />
          <Level $h={87} $bar={80} $tint="#ffd6d7">
            <T w={56} size={41} weight={350} color={GREY} dy={-2}>买1</T>
            <T w={69} size={42} color={GREEN} ml={57} dy={-1}>9.21</T>
            <Spring />
            <T w={81} size={42} dy={-1}>5881</T>
            <Gap $w={5} />
          </Level>
          <Detail>
            <T w={84} size={43} weight={350} color={GREY} ml={95}>明细</T>
            <Down $w={18} $h={12} $ml={26} />
          </Detail>
          <Ticks>
            {TICKS.map(([time, price, count, w, color], i) => (
              <Tick key={i}>
                <T w={90} size={41} color="#505050">{time}</T>
                <T w={price === '9.22' ? 71 : 67} size={41} color={GREEN} ml={37}>{price}</T>
                <Spring />
                <T w={w} size={41} color={color}>{count}</T>
                {count.endsWith('1') && <Gap $w={3} />}
              </Tick>
            ))}
          </Ticks>
          <AllTicks><T w={182} size={30} weight={400} color="#cf3f3d">查看逐笔明细</T></AllTicks>
        </Book>
      </Body>

      <Social>
        <Danmu>
          <T w={38} size={40} weight={900} font={HAN} color="#555" ml={34} dy={-1}>弹</T>
          <T w={156} size={39} weight={350} color="#999" ml={88} dy={1}>发条弹幕</T>
          <RedSpot $x={66} $y={43} $d={12} />
          <RedSpot $x={564} $y={7} $d={13} />
          <Icon $ml={190} $mt={12}>
            <svg width="46" height="46" viewBox="0 0 46 46">
              <rect x="1" y="14" width="44" height="12" rx="2" fill="#e04226" />
              <rect x="4" y="26" width="38" height="18" fill="#d5361e" />
              <ellipse cx="16" cy="8" rx="6" ry="6" fill="none" stroke="#f7b94a" strokeWidth="4" />
              <ellipse cx="29" cy="8" rx="6" ry="6" fill="none" stroke="#f7b94a" strokeWidth="4" />
              <path d="M12 14L22 20L33 14" fill="#f9a13a" />
            </svg>
          </Icon>
        </Danmu>
        <Vote $up><T w={154} size={37} weight={400} color="#de4b43" dy={2}>看涨 59%</T></Vote>
        <Vote $up={false}><T w={146} size={37} weight={400} color="#14a85a" dy={2}>看跌 41%</T></Vote>
      </Social>

      <Dock>
        <Actions>
          <Action $w={248}>
            <Up />
            <T w={129} size={33} weight={350} color="#c6c4c6" dy={7}>化学制品</T>
            <T w={107} size={35} weight={400} color="#25e425" dy={8.5}>-0.96%</T>
          </Action>
          <Action $w={208}>
            <ActionIcon>
              <svg width="50" height="54" viewBox="0 0 50 54" fill="none" stroke="#d0ced0" strokeWidth="2.600">
                <path d="M6 2H44Q48 2 48 6V40L37 52H6Q2 52 2 48V6Q2 2 6 2Z" />
                <path d="M9 14.500H41M9 21.500H41M9 28.500H41M9 35.500H31" />
              </svg>
            </ActionIcon>
            <T w={63} size={33} weight={350} color="#d2d0d2">下单</T>
          </Action>
          <Action $w={208}>
            <ActionIcon>
              <svg width="58" height="54" viewBox="0 0 58 54" fill="none" stroke="#d0ced0" strokeWidth="2.600">
                <rect x="2" y="10" width="54" height="40" rx="5" />
                <path d="M18 4H40M29 20V40M19 30H39" />
                <path d="M10 52.500H20M38 52.500H48" strokeWidth="3" />
              </svg>
            </ActionIcon>
            <T w={63} size={33} weight={350} color="#d2d0d2">诊股</T>
          </Action>
          <Action $w={208}>
            <ActionIcon>
              <svg width="48" height="48" viewBox="0 0 48 48" fill="none" stroke="#d0ced0" strokeWidth="2.200">
                <rect x="1.500" y="1.500" width="45" height="45" />
                <path d="M11 24H37" strokeWidth="2.600" />
              </svg>
            </ActionIcon>
            <T w={96} size={33} weight={350} color="#d2d0d2">删自选</T>
          </Action>
          <Action $w={208}>
            <ActionIcon>
              <svg width="52" height="52" viewBox="0 0 52 52" fill="none" stroke="#d0ced0" strokeWidth="2.400">
                <circle cx="26" cy="26" r="24" />
                <path d="M15 19H37M15 33H37" strokeWidth="3" />
              </svg>
            </ActionIcon>
            <T w={64} size={33} weight={350} color="#d2d0d2">功能</T>
          </Action>
        </Actions>
        <System>
          <svg width="44" height="44" viewBox="0 0 44 44" fill="none" stroke="#b5b1b5" strokeWidth="5">
            <rect x="3.500" y="3.500" width="37" height="37" rx="7.500" />
          </svg>
          <Icon $ml={198} $mt={0}>
            <svg width="30" height="44" viewBox="0 0 30 44" fill="none" stroke="#b5b1b5" strokeWidth="4.500" strokeLinecap="round" strokeLinejoin="round">
              <path d="M25 3L6 20Q4 22 6 24L25 40" />
            </svg>
          </Icon>
        </System>
      </Dock>
    </Screen>
  );
}
